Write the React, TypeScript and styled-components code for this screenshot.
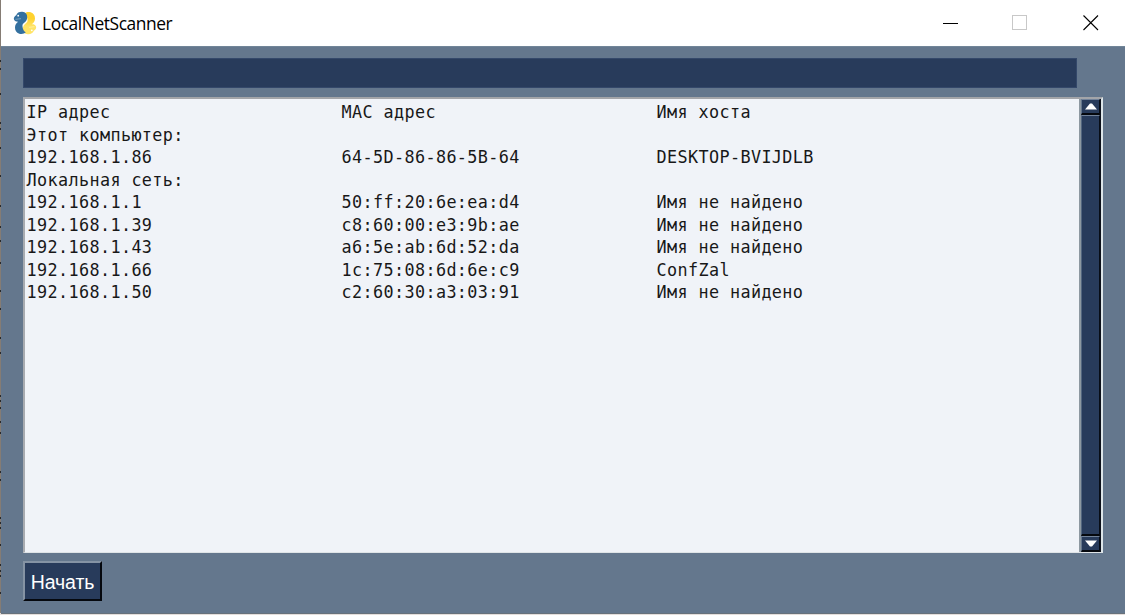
import React from 'react';
import styled, { createGlobalStyle } from 'styled-components';

const GlobalStyle = createGlobalStyle`
  html, body { margin: 0; overflow: hidden; background: #e4dedb; }
  * { box-sizing: border-box; }
`;

const flecks = [60, 68, 93, 122, 128, 147, 175, 205, 226, 240, 262, 290, 308, 337, 352, 395, 400, 407, 421, 432, 471, 479, 517, 522, 527, 544, 564, 570, 575, 592];

const Desktop = styled.div`
  width: 1125px;
  height: 615px;
  padding: 0 0 1px 1px;
  background: ${flecks.map((y) => `linear-gradient(#292a2b, #292a2b) 0 ${y}px / 1px 2px no-repeat`).join(', ')},
    linear-gradient(to bottom, #857c74 0 613px, #e4dedb 613px);
`;

const Window = styled.div`
  height: 614px;
  display: flex;
  flex-direction: column;
  background: #64778d;
  border-bottom: 1px solid #67717b;
`;

const TitleBar = styled.header`
  height: 46px;
  flex: none;
  display: flex;
  align-items: center;
  padding: 0 26px 0 12px;
  background: #fff;
`;

const Title = styled.h1`
  flex: 1;
  margin: 0 0 0 5px;
  font: 400 17.4px/24px 'Open Sans', 'Noto Sans', sans-serif;
  letter-spacing: -0.43px;
  color: #000;
`;

const Controls = styled.div`
  display: flex;
  gap: 54px;
  & > :nth-child(2) { margin: 0 1px 0 -1px; }
`;

const Content = styled.main`
  flex: 1;
  display: flex;
  flex-direction: column;
  align-items: flex-start;
  padding: 11px 22px 0;
  border-top: 1px solid #718598;
`;

const Field = styled.div`
  width: 1054px;
  height: 30px;
  background: #283b5b;
  border: 1px solid #34486a;
`;

const Output = styled.section`
  display: flex;
  width: 1080px;
  height: 456px;
  margin-top: 9px;
  background: #f0f3f8;
  border: solid;
  border-width: 2px 2px 1px 2px;
  border-color: #a3a5a9 #dce5e9 #dfe4e7 #a8abb0;
`;

const Listing = styled.div`
  flex: 1;
  padding: 2px 0 0 1.5px;
  color: #181818;
  font: 16.8px/22.5px 'DejaVu Sans Mono', monospace;
  letter-spacing: 0.385px;
  white-space: pre;
`;

const Row = styled.div`
  display: grid;
  grid-template-columns: 315px 315px 1fr;
  height: 22.5px;
`;

const Scrollbar = styled.div`
  width: 22px;
  display: flex;
  flex-direction: column;
  border: solid;
  border-width: 0 1px 0 2px;
  border-color: #8d98a1 #0b101a #8d98a1 #8d98a1;
  background: #283b5b;
`;

const Arrow = styled.div`
  height: 16px;
  display: flex;
  align-items: center;
  justify-content: center;
  border: solid;
  border-width: 1px 1px 2px 1px;
  border-color: #71829a #080d16 #05080e #64768d;
`;

const Thumb = styled.div`
  flex: 1;
  border: solid;
  border-width: 1px 1px 2px 1px;
  border-color: #71829a #080d16 #05080e #53667f;
`;

const StartButton = styled.button`
  width: 79px;
  height: 40px;
  margin-top: 8px;
  padding: 1px 0 0 0;
  border: 2px solid;
  border-color: #8593a4 #05080e #05080e #8593a4;
  border-radius: 0;
  background: #283b5b;
  color: #fff;
  font: 19.5px/34px 'Liberation Sans', Arial, sans-serif;
  letter-spacing: -0.1px;
  white-space: nowrap;
`;

const rows: string[][] = [
  ['IP адрес', 'MAC адрес', 'Имя хоста'],
  ['Этот компьютер:'],
  ['192.168.1.86', '64-5D-86-86-5B-64', 'DESKTOP-BVIJDLB'],
  ['Локальная сеть:'],
  ['192.168.1.1', '50:ff:20:6e:ea:d4', 'Имя не найдено'],
  ['192.168.1.39', 'c8:60:00:e3:9b:ae', 'Имя не найдено'],
  ['192.168.1.43', 'a6:5e:ab:6d:52:da', 'Имя не найдено'],
  ['192.168.1.66', '1c:75:08:6d:6e:c9', 'ConfZal'],
  ['192.168.1.50', 'c2:60:30:a3:03:91', 'Имя не найдено'],
];

const snake =
  'M3.2 4.200C4 1.700 6.500 .6 9.300 .8C12.600 1 14.300 3.200 14.200 6.200C14.100 9 12.800 10.500 10.900 12C9.600 13.100 9.300 14 9.500 15.500C9.800 18.500 11 20.300 12.800 21.300C11.300 22.800 8.800 23.400 6.300 22.700C3.300 21.800 1.900 19.300 2 16.300C2.100 13.500 3.400 12 5.200 10.800C3.500 10.900 1.600 10.300 1 8.600C.4 6.800 1.500 5.200 3.200 4.200Z';

const Logo = () => (
  <svg width="24" height="24" viewBox="0 0 24 24">
    <defs>
      <linearGradient id="gold" x1="0" y1="1" x2="0" y2="0">
        <stop offset=".3" stopColor="#ffd22f" />
        <stop offset=".65" stopColor="#ffe467" />
      </linearGradient>
    </defs>
    <g transform="rotate(180 12 12)">
      <path fill="url(#gold)" d={snake} />
    </g>
    <path fill="#34709f" d={snake} />
    <circle cx="5.200" cy="4.700" r=".9" fill="#fff" />
    <circle cx="18.800" cy="19.300" r=".9" fill="#fff" />
    <path d="M2.500 8.300L8 7.700M21.500 15.700L16 16.300" stroke="#fff" strokeOpacity=".5" strokeWidth=".7" />
  </svg>
);

const ScrollArrow = ({ down }: { down?: boolean }) => (
  <Arrow>
    <svg width="12" height="7" viewBox="0 0 12 7">
      <path fill="#fff" d={down ? 'M0 .5H12L7 6.500H5Z' : 'M0 6.500H12L7 .5H5Z'} />
    </svg>
  </Arrow>
);

export default function App() {
  return (
    <Desktop>
      <GlobalStyle />
      <Window>
        <TitleBar>
          <Logo />
          <Title>LocalNetScanner</Title>
          <Controls>
            <svg width="16" height="16"><path d="M0 8.500H15" stroke="#000" /></svg>
            <svg width="16" height="16"><rect x=".5" y=".5" width="14" height="14" fill="none" stroke="#c8c8c8" /></svg>
            <svg width="16" height="16"><path d="M.5 .5L15 15M15 .5L.5 15" stroke="#000" strokeWidth="1.100" /></svg>
          </Controls>
        </TitleBar>
        <Content>
          <Field />
          <Output>
            <Listing>
              {rows.map((cells, i) => (
                <Row key={i}>{cells.map((c, j) => <span key={j}>{c}</span>)}</Row>
              ))}
            </Listing>
            <Scrollbar>
              <ScrollArrow />
              <Thumb />
              <ScrollArrow down />
            </Scrollbar>
          </Output>
          <StartButton>Начать</StartButton>
        </Content>
      </Window>
    </Desktop>
  );
}
